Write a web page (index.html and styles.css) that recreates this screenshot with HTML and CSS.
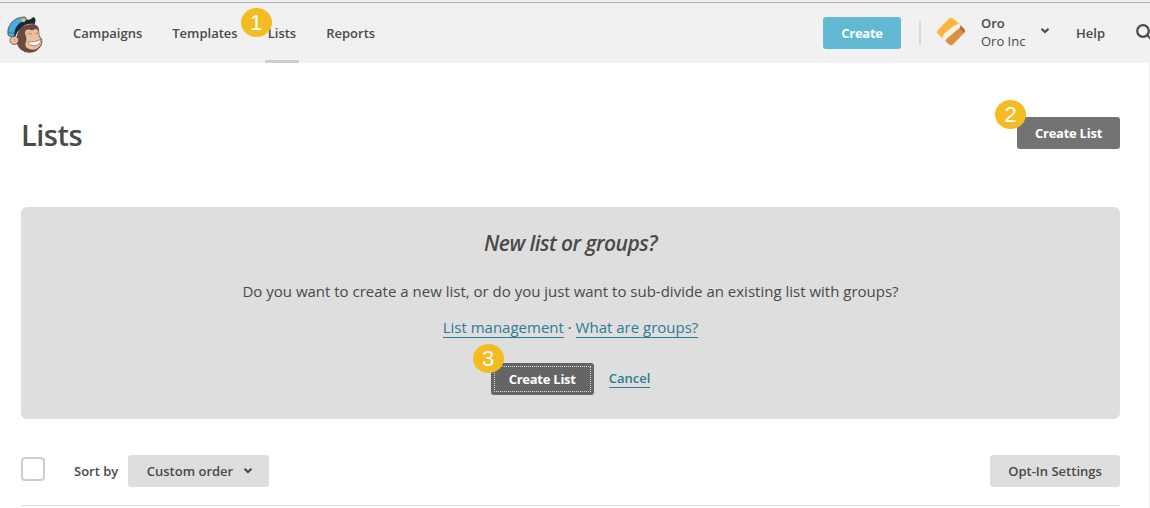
FILE: index.html
```html
<!DOCTYPE html>
<html lang="en">
<head>
<meta charset="utf-8">
<title>Lists</title>
<link rel="stylesheet" href="styles.css">
</head>
<body>
<header class="topbar">
  <svg class="logo" width="36" height="39" viewBox="0 0 36 39">
    <path d="M13 13 Q18 9 27 9 Q32 11 32 15 L32.500 21 Q37 25 34.500 30 Q31 37.500 22 37.800 Q13 37 10 29 Q8 22 13 13Z" fill="#6b4a43"/>
    <circle cx="7.200" cy="25.300" r="4.200" fill="#edc19c" stroke="#7b574d" stroke-width=".9"/>
    <path d="M6 23.500q2.500 0 2 3.500" fill="none" stroke="#c08f73" stroke-width=".8"/>
    <path d="M18 18.500 Q18 14 22 14.500 Q26 16 28 14 Q31 14 31.500 17 Q31.500 20 32 22 Q36 25 34 29 Q31 35.500 24 34.500 Q17 33 18.500 28 Q20.500 24 18 18.500Z" fill="#edc19c"/>
    <path d="M20.500 18.800q2.500-1.500 4.500.7M28.500 18.500q1.500-1 2.500 0" fill="none" stroke="#a97863" stroke-width=".9"/>
    <path d="M21 26.800 Q28 27.500 34 24.500 Q33.500 30 27.500 30.800 Q22.500 31 21 26.800Z" fill="#fff" stroke="#8b5f50" stroke-width=".7"/>
    <path d="M1 20 Q-.5 14 4 8 Q9 2 18 2 L21 6 Q12 9 7 21.500 Q3 22.500 1 20Z" fill="#48ade0" stroke="#554047" stroke-width=".8"/>
    <path d="M1.500 17 Q4 19 6.500 18 Q9 11 14 7" fill="none" stroke="#2480ae"/>
    <path d="M10 11 Q15 5 23 4.500 L26.500 2 Q30 4 27.500 9 Q20 8 15 12 Q11 15 8.500 21 L7 20.500 Q8 14 10 11Z" fill="#1e2834"/>
    <path d="M14.500 3.800l3-.6 1.500 2-2 2-2.500-1z" fill="#f1c13b"/>
  </svg>
  <nav class="nav">
    <a class="nav-item">Campaigns</a>
    <a class="nav-item">Templates</a>
    <a class="nav-item nav-current"><span class="step step-one">1</span>Lists</a>
    <a class="nav-item">Reports</a>
  </nav>
  <button class="button button-create">Create</button>
  <span class="divider"></span>
  <svg class="avatar" width="30" height="30" viewBox="0 0 30 30">
    <path d="M13 1.500q2-1.500 4 0l6.500 5.500-16 15.500-6-6q-1.200-1.500 0-3z" fill="#fbb540"/>
    <path d="m24.500 8 4 4.500q1.200 1.500 0 3L17 27.500q-2 1.500-4 0l-4.500-4z" fill="#dc9141"/>
    <path d="m23.500 7 5 5.500q1.200 1.500 0 3l-.5.500-5-5z" fill="#ad713a"/>
    <path d="M6.500 20.500Q7 18 9 16L18 9q2-1.500 5.500-2 2 1 .5 3.500L12 20.500Q9.500 22 9.500 24q-3-1-3-3.500z" fill="#f4f2ef"/>
  </svg>
  <div class="account"><strong class="account-name">Oro</strong><span>Oro Inc</span></div>
  <svg class="account-arrow" width="10" height="8" viewBox="0 0 10 8"><path d="M1.500 1.800 5 5l3.500-3.200" class="chevron"/></svg>
  <a class="help">Help</a>
  <svg class="search" width="15" height="17" viewBox="0 0 15 17"><circle cx="8" cy="7" r="5.800"/><path d="m12 11 4 4"/></svg>
</header>
<main class="page">
  <div class="title-row">
    <h1 class="title">Lists</h1>
    <button class="button button-dark"><span class="step step-two">2</span>Create List</button>
  </div>
  <section class="panel">
    <h2 class="panel-title">New list or groups?</h2>
    <p class="panel-text">Do you want to create a new list, or do you just want to sub-divide an existing list with groups?</p>
    <p class="panel-links"><a class="link">List management</a> · <a class="link">What are groups?</a></p>
    <div class="panel-actions">
      <button class="button button-dark button-focus"><span class="step step-three">3</span>Create List</button>
      <a class="link cancel">Cancel</a>
    </div>
  </section>
  <div class="toolbar">
    <span class="checkbox"></span>
    <span class="sort-label">Sort by</span>
    <button class="button button-light button-sort">Custom order<svg width="10" height="8" viewBox="0 0 10 8"><path d="M1.500 1.800 5 5l3.500-3.200" class="chevron"/></svg></button>
    <button class="button button-light button-settings">Opt-In Settings</button>
  </div>
</main>
</body>
</html>
```
FILE: styles.css
```css
* { box-sizing: border-box; }
body {
  margin: 0;
  height: 508px;
  overflow: hidden;
  background: #fff;
  color: #4a4a4a;
  font: 600 13px/18px "Open Sans", sans-serif;
}
.topbar {
  display: flex;
  align-items: flex-start;
  height: 63px;
  background: linear-gradient(#f1f1f1 2px, #b2b2b2 2px, #b2b2b2 3px, #f1f1f1 3px);
}
.logo { margin: 15px 2px 0 7px; flex: none; }
.nav { display: flex; gap: 30px; margin-left: 28px; height: 63px; }
.nav-item { position: relative; padding-top: 24px; }
.nav-current { margin: 0 -3px; padding: 24px 3px 0; border-bottom: 3px solid #cfcfcf; }
.button {
  position: relative;
  display: flex;
  align-items: center;
  justify-content: center;
  height: 32px;
  padding: 0;
  border: 0;
  border-radius: 3px;
  font: 700 13px/18px "Open Sans", sans-serif;
  letter-spacing: -0.25px;
  color: #fff;
}
.button-create { width: 78px; margin: 17px 0 0 auto; background: #61b9d4; }
.divider { width: 2px; height: 24px; margin: 21px 0 0 18px; background: #d7d7d7; }
.avatar { margin: 17px 0 0 15px; flex: none; }
.account { display: flex; flex-direction: column; width: 59px; margin: 14px 0 0 15px; font-weight: 400; }
.account-name { font-weight: 600; }
.account-arrow { margin-top: 27px; }
.chevron { fill: none; stroke: #4a4a4a; stroke-width: 2.2; }
.help { margin: 24px 0 0 26px; width: 59px; }
.search { margin-top: 24px; fill: none; stroke: #4a4a4a; stroke-width: 2.2; flex: none; }
.page { height: 445px; padding: 0 29px 0 21px; border-right: 1px solid #ededed; }
.title-row { display: flex; justify-content: space-between; height: 144px; padding-top: 54px; }
.title { margin: -1px 0 0; font: 600 29px/38px "Open Sans", sans-serif; letter-spacing: -0.5px; }
.button-dark { width: 103px; background: #737373; }
.panel { height: 212px; padding-top: 22px; border-radius: 6px; background: #dedede; text-align: center; }
.panel-title { margin: 0; font: italic 600 21px/28px "Open Sans", sans-serif; letter-spacing: -0.55px; }
.panel-text { margin: 22px 0 0; font: 400 15px/24px "Open Sans", sans-serif; }
.panel-links { margin: 12px 0 0; font: 400 15px/24px "Open Sans", sans-serif; }
.link { color: #2c7c93; border-bottom: 1px solid #2c7c93; }
.panel-actions { display: flex; justify-content: center; gap: 15px; margin-top: 24px; }
.button-focus { background: #656565; outline: 1px dotted #ddd; outline-offset: -4px; }
.cancel { height: 18px; margin-top: 7px; line-height: 17px; }
.toolbar { display: flex; align-items: flex-start; height: 87px; padding-top: 36px; border-bottom: 1px solid #dedede; }
.checkbox { width: 24px; height: 24px; margin-top: 2px; border: 2px solid #cecece; border-radius: 4px; }
.sort-label { width: 54px; margin: 7px 0 0 29px; }
.button-light { font-weight: 600; letter-spacing: 0; background: #dedede; color: #4a4a4a; }
.button-sort { width: 141px; gap: 10px; padding-left: 3px; }
.button-settings { width: 130px; margin-left: auto; }
.step {
  position: absolute;
  z-index: 1;
  width: 31px;
  height: 29px;
  border-radius: 50%;
  background: #f4bc22;
  color: #fff;
  font: 400 22px/30px "Liberation Sans", sans-serif;
  letter-spacing: 0;
  text-align: center;
}
.step-one { left: -24px; top: 8px; }
.step-two { left: -22px; top: -17px; }
.step-three { left: -18px; top: -19px; }
```
